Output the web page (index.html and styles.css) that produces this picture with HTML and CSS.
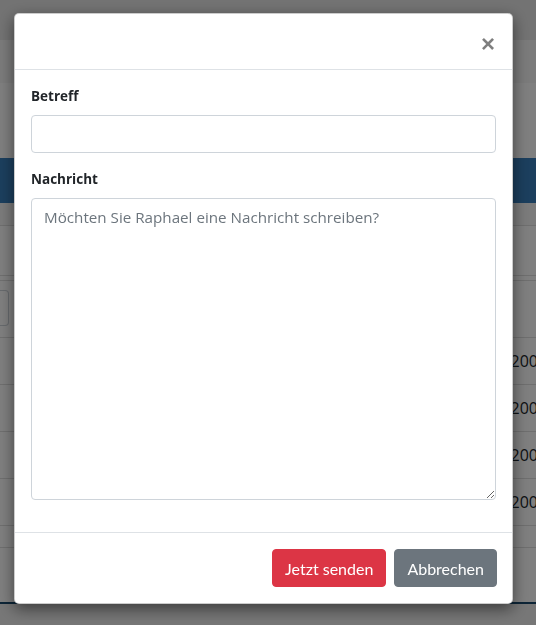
FILE: index.html
```html
<!DOCTYPE html>
<html lang="de">
<head>
    <meta charset="UTF-8">
    <meta name="viewport" content="width=device-width, initial-scale=1.0">
    <title>Nachricht schreiben</title>
    <link rel="stylesheet" href="styles.css">
</head>
<body>

    <div class="seite">
        <div class="kopf"></div>
        <div class="unterkopf"></div>
        <div class="leer"></div>
        <div class="banner"></div>
        <div class="reiter"></div>
        <div class="werkzeug"></div>
        <div class="suche">
            <div class="suchfeld"></div>
        </div>
        <div class="zeile"><span class="datum">01.2000</span></div>
        <div class="zeile"><span class="datum">01.2000</span></div>
        <div class="zeile"><span class="datum">01.2000</span></div>
        <div class="zeile"><span class="datum">01.2000</span></div>
        <div class="zeile-klein"></div>
        <div class="fuss"></div>
    </div>

    <div class="hintergrund"></div>

    <div class="modal">
        <div class="modal-dialog">
            <div class="modal-header">
                <button type="button" class="close">&times;</button>
            </div>
            <div class="modal-body">
                <div class="form-group">
                    <label for="betreff">Betreff</label>
                    <input type="text" id="betreff" class="form-control">
                </div>
                <div class="form-group">
                    <label for="nachricht">Nachricht</label>
                    <textarea id="nachricht" class="form-control textfeld" placeholder="Möchten Sie Raphael eine Nachricht schreiben?"></textarea>
                </div>
            </div>
            <div class="modal-footer">
                <button type="button" class="btn btn-rot">Jetzt senden</button>
                <button type="button" class="btn btn-grau">Abbrechen</button>
            </div>
        </div>
    </div>

</body>
</html>
```

FILE: styles.css
```css
body {
    font-family: 'Open Sans', 'Noto Sans', sans-serif;
    margin: 0;
    padding: 0;
    color: #212529;
    background-color: #fff;
    overflow: hidden;
}

/* Seite hinter dem Dialog */
.seite {
    height: 625px;
    display: flex;
    flex-direction: column;
}

.kopf {
    height: 40px;
    background-color: #e6e6e6;
}

.unterkopf {
    height: 43px;
    background-color: #f6f6f6;
}

.leer {
    height: 75px;
}

.banner {
    height: 45px;
    background-color: #387ebc;
}

.reiter {
    height: 22px;
    background-color: #f6f6f6;
    border-bottom: 1px solid #dedede;
}

.werkzeug {
    height: 49px;
    border-bottom: 1px solid #dedede;
    margin-bottom: 4px;
}

.suche {
    height: 58px;
    border-top: 1px solid #dedede;
    border-bottom: 1px solid #dedede;
    padding-top: 9px;
    box-sizing: border-box;
}

.suchfeld {
    width: 9px;
    height: 36px;
    border: 1px solid #ced4da;
    border-left: none;
    border-radius: 0 4px 4px 0;
    box-sizing: border-box;
}

.zeile {
    height: 46px;
    border-bottom: 1px solid #dedede;
    display: flex;
    align-items: center;
    padding-left: 488px;
    font-size: 16px;
    white-space: nowrap;
}

.zeile-klein {
    height: 21px;
    border-bottom: 1px solid #dedede;
}

.fuss {
    flex: 1;
    margin-top: 54px;
    border-top: 2px solid #1a4a6e;
    background-color: #eeeeee;
}

.hintergrund {
    position: fixed;
    top: 0;
    left: 0;
    width: 100%;
    height: 100%;
    background-color: rgba(0, 0, 0, 0.5);
}

/* Dialog */
.modal {
    position: fixed;
    top: 0;
    left: 0;
    width: 100%;
    height: 100%;
}

.modal-dialog {
    width: 499px;
    margin: 13px 0 0 14px;
    box-sizing: border-box;
    background-color: #fff;
    border: 1px solid rgba(0, 0, 0, 0.2);
    border-radius: 5px;
    box-shadow: 0 5px 15px rgba(0, 0, 0, 0.5);
}

.modal-header {
    height: 56px;
    box-sizing: border-box;
    display: flex;
    justify-content: flex-end;
    align-items: center;
    padding: 0 17px;
    border-bottom: 1px solid #dee2e6;
}

.close {
    background: none;
    border: none;
    padding: 0;
    margin-top: 5px;
    font-family: 'Liberation Sans', sans-serif;
    font-size: 24px;
    font-weight: 700;
    line-height: 1;
    color: #000;
    opacity: 0.5;
}

.modal-body {
    padding: 16px;
}

.form-group {
    margin-bottom: 16px;
}

.form-group label {
    display: block;
    font-size: 13.5px;
    font-weight: 700;
    line-height: 21px;
    margin-bottom: 8px;
}

.form-control {
    display: block;
    width: 100%;
    height: 38px;
    box-sizing: border-box;
    padding: 6px 12px;
    font-family: 'Open Sans', sans-serif;
    font-size: 15.2px;
    line-height: 24px;
    color: #495057;
    border: 1px solid #ced4da;
    border-radius: 4px;
    margin: 0;
}

.textfeld {
    height: 302px;
    resize: vertical;
}

.textfeld::placeholder {
    color: #6c757d;
    opacity: 1;
}

.modal-footer {
    display: flex;
    justify-content: flex-end;
    gap: 8px;
    padding: 16px 15px 16px 12px;
    border-top: 1px solid #dee2e6;
}

.btn {
    height: 38px;
    padding: 0 12px;
    font-family: 'Lato', sans-serif;
    font-size: 16px;
    color: #fff;
    border: 1px solid transparent;
    border-radius: 4px;
}

.btn-rot {
    background-color: #dc3545;
    border-color: #dc3545;
}

.btn-grau {
    background-color: #6c757d;
    border-color: #6c757d;
}
```
